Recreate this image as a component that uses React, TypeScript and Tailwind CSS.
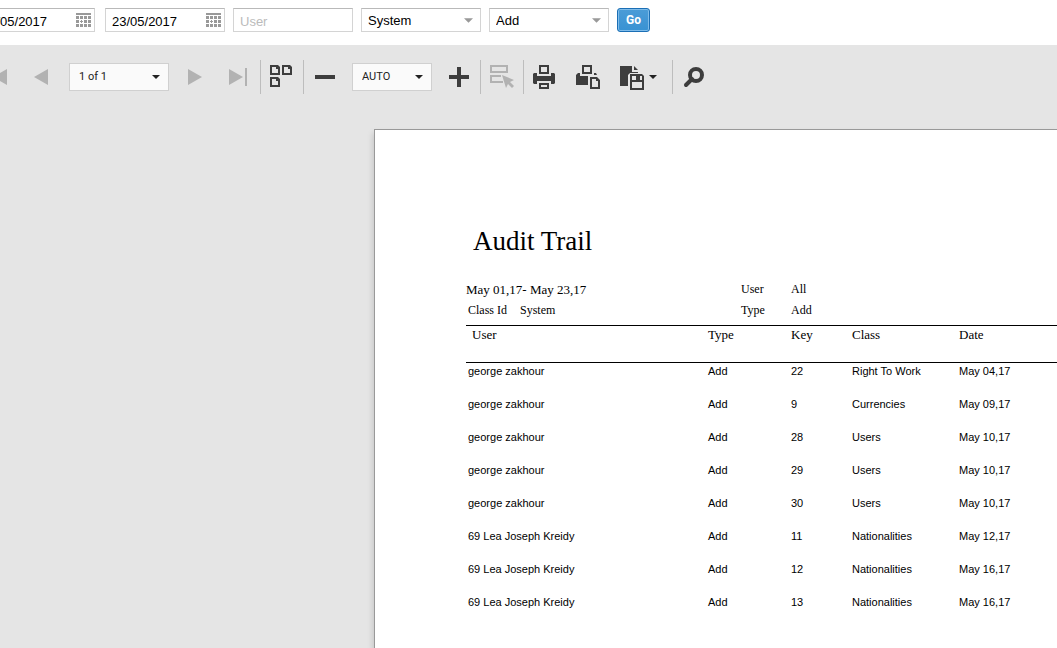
import React, { useState } from "react";

type AuditRow = {
  user: string;
  type: string;
  key: number;
  className: string;
  date: string;
};

const rows: AuditRow[] = [
  { user: "george zakhour", type: "Add", key: 22, className: "Right To Work", date: "May 04,17" },
  { user: "george zakhour", type: "Add", key: 9, className: "Currencies", date: "May 09,17" },
  { user: "george zakhour", type: "Add", key: 28, className: "Users", date: "May 10,17" },
  { user: "george zakhour", type: "Add", key: 29, className: "Users", date: "May 10,17" },
  { user: "george zakhour", type: "Add", key: 30, className: "Users", date: "May 10,17" },
  { user: "69 Lea Joseph Kreidy", type: "Add", key: 11, className: "Nationalities", date: "May 12,17" },
  { user: "69 Lea Joseph Kreidy", type: "Add", key: 12, className: "Nationalities", date: "May 16,17" },
  { user: "69 Lea Joseph Kreidy", type: "Add", key: 13, className: "Nationalities", date: "May 16,17" },
];

const fieldBox =
  "flex h-6 w-[120px] shrink-0 items-center border border-[#d4d4d4] border-t-[#b9b9b9] bg-white";

const CalendarIcon = () => (
  <svg width="15" height="14" viewBox="0 0 15 14" fill="#999" shapeRendering="crispEdges">
    <rect width="15" height="2" />
    {[3, 7, 11].map((y) =>
      [0, 4, 8, 12].map((x) =>
        x === 4 && y === 7 ? (
          <path key={`${x}-${y}`} d="M5 7h1v1h1v1H6v1H5V9H4V8h1z" />
        ) : (
          <rect key={`${x}-${y}`} x={x} y={y} width="3" height="3" />
        )
      )
    )}
  </svg>
);

const Caret = ({ className }: { className: string }) => (
  <svg className={className} viewBox="0 0 8 4" fill="currentColor">
    <path d="M0 0h8L4 4z" />
  </svg>
);

const DateField = ({ label, initial }: { label: string; initial: string }) => {
  const [value, setValue] = useState(initial);
  return (
    <div className={fieldBox}>
      <input
        type="text"
        aria-label={label}
        value={value}
        onChange={(e) => setValue(e.target.value)}
        className="h-full min-w-0 flex-1 pl-1.5 pt-0.5 text-[13px] text-black outline-none"
      />
      <button type="button" aria-label={`Open ${label} calendar`} className="mr-[3px] shrink-0">
        <CalendarIcon />
      </button>
    </div>
  );
};

const FilterSelect = ({ label, options }: { label: string; options: string[] }) => (
  <div className={`${fieldBox} relative`}>
    <select
      aria-label={label}
      className="h-full w-full appearance-none bg-transparent pl-1.5 pt-0.5 text-[13px] text-black outline-none"
    >
      {options.map((option) => (
        <option key={option}>{option}</option>
      ))}
    </select>
    <Caret className="pointer-events-none absolute right-[7px] h-[5px] w-[9px] text-[#999]" />
  </div>
);

const ToolbarSelect = ({
  label,
  options,
  className,
}: {
  label: string;
  options: string[];
  className: string;
}) => (
  <div
    className={`relative mx-[5px] flex h-7 shrink-0 items-center border border-[#d0d0d0] bg-[#fafafa] ${className}`}
  >
    <select
      aria-label={label}
      className="h-full w-full appearance-none bg-transparent pl-[9px] font-[Roboto,sans-serif] text-[11px] text-[#222] outline-none"
    >
      {options.map((option) => (
        <option key={option}>{option}</option>
      ))}
    </select>
    <Caret className="pointer-events-none absolute right-2 h-1 w-2 text-[#222]" />
  </div>
);

const Separator = () => <div className="h-[34px] w-px shrink-0 bg-[#bdbdbd]" />;

const ToolButton = ({
  label,
  disabled = false,
  children,
}: {
  label: string;
  disabled?: boolean;
  children: React.ReactNode;
}) => (
  <button
    type="button"
    aria-label={label}
    disabled={disabled}
    className="flex h-9 w-[42px] shrink-0 items-center justify-center text-[#3d3d3d] disabled:text-[#b2b2b2]"
  >
    <svg width="24" height="24" viewBox="0 0 24 24" fill="currentColor">
      {children}
    </svg>
  </button>
);

const FilterBar = () => (
  <form
    className="-ml-[25px] flex h-[45px] items-start gap-2 pt-2"
    onSubmit={(e) => e.preventDefault()}
  >
    <div className="flex gap-2.5">
      <DateField label="From date" initial="01/05/2017" />
      <DateField label="To date" initial="23/05/2017" />
    </div>
    <div className={fieldBox}>
      <input
        type="text"
        aria-label="User"
        placeholder="User"
        className="h-full w-full pl-1.5 pt-0.5 text-[13px] text-black outline-none placeholder:text-[#bbb]"
      />
    </div>
    <FilterSelect label="Class" options={["System", "Company", "Employee"]} />
    <FilterSelect label="Type" options={["Add", "Edit", "Delete"]} />
    <button
      type="submit"
      className="h-6 w-[33px] shrink-0 rounded-[3px] border border-[#1b6fb5] bg-linear-to-b from-[#4b9cd7] to-[#3892d3] font-[Roboto,sans-serif] text-xs font-bold text-white inset-ring inset-ring-[#7fbcea]"
    >
      Go
    </button>
  </form>
);

const Toolbar = () => (
  <div role="toolbar" aria-label="Report" className="-ml-[22px] flex h-16 items-center">
    <div className="flex items-center gap-px">
      <ToolButton label="First page" disabled>
        <path d="M20 4v16L6 12zM2 3h2v18H2z" />
      </ToolButton>
      <ToolButton label="Previous page" disabled>
        <path d="M18 4v16L4 12z" />
      </ToolButton>
      <ToolbarSelect label="Page" options={["1 of 1"]} className="w-[100px]" />
      <ToolButton label="Next page" disabled>
        <path d="M4 4v16l14-8z" />
      </ToolButton>
      <ToolButton label="Last page" disabled>
        <path d="M2 4v16l14-8zM18 3h2v18h-2z" />
      </ToolButton>
    </div>
    <Separator />
    <ToolButton label="Multiple pages">
      <g fillRule="evenodd">
        <path d="M0 0h8l2 2v8H0zM2 2v6h6V4H6V2z" />
        <path d="M12 0h8l2 2v8H12zM14 2v6h6V4h-2V2z" />
        <path d="M0 12h8l2 2v8H0zM2 14v6h6v-4H6v-2z" />
      </g>
    </ToolButton>
    <Separator />
    <div className="flex items-center gap-px">
      <ToolButton label="Zoom out">
        <path d="M2 10h20v4H2z" />
      </ToolButton>
      <ToolbarSelect label="Zoom" options={["AUTO", "100%", "150%"]} className="w-20" />
      <ToolButton label="Zoom in">
        <path d="M10 2h4v8h8v4h-8v8h-4v-8H2v-4h8z" />
      </ToolButton>
    </div>
    <Separator />
    <ToolButton label="Select" disabled>
      <path fillRule="evenodd" d="M0 0h18v8H0zM2 2v4h14V2z" />
      <path d="M0 10h11v2H2v4h11v2H0z" />
      <path d="M12 10l12 5-4 2 4 4-2 2-4-4-2 4z" />
    </ToolButton>
    <Separator />
    <div className="flex items-center gap-px">
      <ToolButton label="Print">
        <path fillRule="evenodd" d="M6 0h10v9H6zM8 2v5h6V2z" />
        <path d="M0 9l1-1h3v3h14V8h3l1 1v9l-1 1h-3v-3H4v3H1l-1-1z" />
        <path fillRule="evenodd" d="M6 18h10v6H6zM8 20v2h6v-2z" />
      </ToolButton>
      <ToolButton label="Print page">
        <path fillRule="evenodd" d="M6 0h10v9H6zM8 2v5h6V2z" />
        <path d="M0 10l2-2h2v3h8v9H0zM18 8h2l1 2h-3z" />
        <path fillRule="evenodd" d="M14 12h7l3 3v9H14zM16 14v8h6v-6h-2v-2z" />
      </ToolButton>
      <button
        type="button"
        aria-label="Export"
        className="flex h-9 w-[62px] shrink-0 items-center gap-[5px] pl-2.5 text-[#3d3d3d]"
      >
        <svg width="24" height="26" viewBox="0 0 24 26" fill="currentColor">
          <path d="M0 2h12v6h6v1H10L8 11v11H0zM14 2l4 4h-4z" />
          <path
            fillRule="evenodd"
            d="M10 10h12l2 2v14H10zM12 12v4h10v-4zM12 18v6h10v-6z"
          />
          <path d="M16 12h4v4h-4z" />
        </svg>
        <Caret className="h-1 w-2 text-[#222]" />
      </button>
    </div>
    <Separator />
    <ToolButton label="Search">
      <circle cx="14" cy="10" r="6" fill="none" stroke="currentColor" strokeWidth="4" />
      <path d="M10 14L4 20" stroke="currentColor" strokeWidth="4" strokeLinecap="round" />
    </ToolButton>
  </div>
);

const ReportPage = () => (
  <article className="ml-[374px] mt-5 flex-1 border-l border-t border-[#999] bg-white pl-[91px] pt-[95px] text-black shadow-[-1px_4px_6px_rgba(0,0,0,0.15)]">
    <h1 className="pl-[7px] font-['Liberation_Serif',serif] text-[27px] leading-8">Audit Trail</h1>
    <div className="mt-[22px] grid grid-cols-[275px_50px_auto] font-['Liberation_Serif',serif] text-xs leading-[21px]">
      <span className="text-[13px]">May 01,17- May 23,17</span>
      <span>User</span>
      <span>All</span>
      <div className="flex pl-0.5">
        <span className="w-[52px]">Class Id</span>
        <span>System</span>
      </div>
      <span>Type</span>
      <span>Add</span>
    </div>

    <table className="mt-1 w-full table-fixed border-separate border-spacing-0 text-left">
      <colgroup>
        <col className="w-[240px]" />
        <col className="w-[83px]" />
        <col className="w-[61px]" />
        <col className="w-[107px]" />
        <col />
      </colgroup>
      <thead className="font-['Liberation_Serif',serif] text-[13px] leading-[18px]">
        <tr className="h-[38px] align-top *:border-y *:border-black *:pl-0.5 *:font-normal">
          <th>
            <span className="pl-1">User</span>
          </th>
          <th>Type</th>
          <th>Key</th>
          <th>Class</th>
          <th>Date</th>
        </tr>
      </thead>
      <tbody className="text-[11px] leading-4">
        {rows.map((row) => (
          <tr key={row.key} className="h-[33px] align-top *:pl-0.5">
            <td>{row.user}</td>
            <td>{row.type}</td>
            <td>{row.key}</td>
            <td>{row.className}</td>
            <td>{row.date}</td>
          </tr>
        ))}
      </tbody>
    </table>
  </article>
);

const App = () => {
  return (
    <div className="flex min-h-screen flex-col overflow-hidden bg-white font-['Liberation_Sans',Arial,sans-serif]">
      <FilterBar />
      <main className="flex flex-1 flex-col bg-[#e5e5e5]">
        <Toolbar />
        <ReportPage />
      </main>
    </div>
  );
};

export default App;
